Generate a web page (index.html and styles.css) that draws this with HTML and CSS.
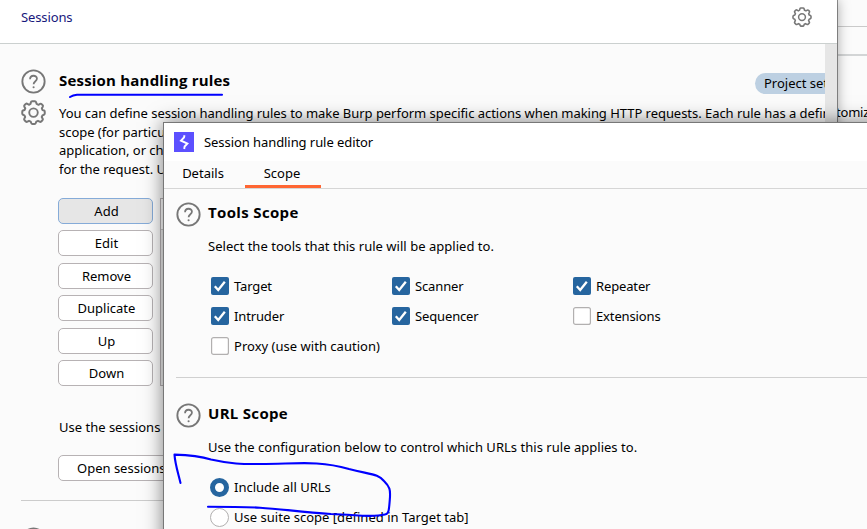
FILE: index.html
```html
<!DOCTYPE html>
<html lang="en">
<head>
<meta charset="utf-8">
<title>Sessions</title>
<link rel="stylesheet" href="styles.css">
</head>
<body>
<svg class="defs" width="0" height="0" aria-hidden="true">
  <symbol id="help" viewBox="0 0 24 24">
    <circle cx="12" cy="12" r="10.7" fill="none" stroke="#777" stroke-width="1.8"/>
    <path d="M8.7 9.8C8.7 5.4 15.4 5.5 15.3 9.4C15.3 11.8 12.1 11.7 12.1 14.6" fill="none" stroke="#777" stroke-width="1.7"/>
    <circle cx="12.1" cy="17.5" r="1" fill="#777"/>
  </symbol>
  <symbol id="gear" viewBox="0 0 24 24">
    <path d="M9.5 2.2Q9.8 1.2 10.7 1.2H13.3Q14.2 1.2 14.5 2.2L15 3.8L16.8 4.6L18.3 3.8Q19.2 3.4 19.8 4L20.8 5Q21.4 5.6 20.9 6.5L20 8L20.7 9.7L22.1 10.1Q22.8 10.4 22.8 11.2V13Q22.8 13.9 22 14.2L20.6 14.7L19.9 16.3L20.8 17.9Q21.3 18.7 20.6 19.4L19.4 20.6Q18.7 21.3 17.8 20.8L16.3 20L14.7 20.7L14.2 22.1Q13.9 23 13 23H11Q10.1 23 9.8 22.1L9.3 20.7L7.7 20L6.2 20.8Q5.3 21.3 4.6 20.6L3.4 19.4Q2.7 18.7 3.2 17.9L4 16.3L3.3 14.7L1.9 14.2Q1.2 13.9 1.2 13V11.2Q1.2 10.4 1.9 10.1L3.4 9.6L4.1 8L3.2 6.4Q2.7 5.6 3.4 4.9L4.6 3.8Q5.3 3.2 6.2 3.7L7.6 4.6L9.1 3.8Z" fill="none" stroke="#777" stroke-width="1.9" stroke-linejoin="round"/>
    <circle cx="12" cy="12.1" r="4.1" fill="none" stroke="#777" stroke-width="1.8"/>
  </symbol>
</svg>

<div class="desktop">
  <section class="window backdrop">
    <div class="strip first"></div>
    <div class="strip second"></div>
    <p class="label">tomize</p>
  </section>

  <section class="window settings">
    <header class="settings-head">
      <span class="crumb">Sessions</span>
      <svg class="icon head-gear"><use href="#gear"/></svg>
    </header>
    <div class="settings-body">
      <main class="content">
        <div class="section">
          <div class="side">
            <svg class="icon large"><use href="#help"/></svg>
            <svg class="icon large"><use href="#gear"/></svg>
          </div>
          <div class="main">
            <div class="title-row">
              <h2>Session handling rules</h2>
              <span class="badge">Project setting</span>
            </div>
            <p class="intro">You can define session handling rules to make Burp perform specific actions when making HTTP requests. Each rule has a defined<br>scope (for particular<br>application, or checking<br>for the request. Use</p>
            <div class="rules">
              <div class="buttons">
                <button class="selected">Add</button>
                <button>Edit</button>
                <button>Remove</button>
                <button>Duplicate</button>
                <button>Up</button>
                <button>Down</button>
              </div>
              <div class="table"><div class="thead"></div></div>
            </div>
            <p class="tracer">Use the sessions tracer</p>
            <button class="open">Open sessions tracer</button>
          </div>
        </div>
        <hr>
        <svg class="icon large next"><use href="#help"/></svg>
      </main>
      <div class="scrollbar"></div>
    </div>
    <svg class="ink underline" width="160" height="8" viewBox="0 0 160 8"><path d="M2 5Q5 3 9 2.7H154"/></svg>
  </section>

  <section class="window dialog">
    <header class="titlebar">
      <svg class="logo" viewBox="0 0 20 20"><rect width="20" height="20" fill="#5c50ff"/><path d="M10.5 3.2L10 5.5L7 8.6L13.4 11.6L10.6 14.5L10.2 17" fill="none" stroke="#fff" stroke-width="1.9"/></svg>
      <span class="name">Session handling rule editor</span>
    </header>
    <nav class="tabs"><span class="tab">Details</span><span class="tab active">Scope</span></nav>
    <div class="block tools">
      <div class="heading"><svg class="icon large"><use href="#help"/></svg><h2>Tools Scope</h2></div>
      <p class="desc">Select the tools that this rule will be applied to.</p>
      <div class="checks">
        <label><svg class="box"><use href="#on"/></svg><span>Target</span></label>
        <label><svg class="box"><use href="#on"/></svg><span>Scanner</span></label>
        <label><svg class="box"><use href="#on"/></svg><span>Repeater</span></label>
        <label><svg class="box"><use href="#on"/></svg><span>Intruder</span></label>
        <label><svg class="box"><use href="#on"/></svg><span>Sequencer</span></label>
        <label><svg class="box"><use href="#off"/></svg><span>Extensions</span></label>
        <label><svg class="box"><use href="#off"/></svg><span class="wide">Proxy (use with caution)</span></label>
      </div>
    </div>
    <div class="block url">
      <div class="heading"><svg class="icon large"><use href="#help"/></svg><h2>URL Scope</h2></div>
      <p class="desc">Use the configuration below to control which URLs this rule applies to.</p>
      <div class="radios">
        <label><i class="radio checked"></i><span>Include all URLs</span></label>
        <label><i class="radio"></i><span class="wide">Use suite scope [defined in Target tab]</span></label>
      </div>
    </div>
  </section>

  <svg class="ink loop" width="222" height="66" viewBox="0 0 222 66"><path d="M9.5 30C6 16 4 10 3.5 1.6C19 2 32 4 40 6.5C60 11 70 11 90 11C125 11 147 7 178 16C202 22 207 21 213 28C220 35 219 38 219 44C218 57 218 61 214 61.5C199 65 186 61.5 160 61C130 59 110 56 89 54.7C70 53.7 55 53.7 37 53.7"/></svg>
</div>

<svg class="defs" width="0" height="0" aria-hidden="true">
  <symbol id="on" viewBox="0 0 18 18"><rect width="18" height="18" rx="2" fill="#26659f"/><path d="M3.8 9.3L7.2 13L13.8 4.7" fill="none" stroke="#fff" stroke-width="2.3"/></symbol>
  <symbol id="off" viewBox="0 0 18 18"><rect x=".6" y=".6" width="16.8" height="16.8" rx="2" fill="#fff" stroke="#b2b0b0" stroke-width="1.2"/></symbol>
</svg>
</body>
</html>
```

FILE: styles.css
```css
* { box-sizing: border-box; }
body { margin: 0; font: 13px/18px "Noto Sans", sans-serif; color: #000; overflow: hidden; }
h2, p { margin: 0; white-space: nowrap; }
h2 { font: 700 15px/20px "Open Sans", sans-serif; letter-spacing: .2px; }
span { white-space: nowrap; }
svg { display: block; flex: none; }
.defs { position: absolute; }
.icon { width: 20px; height: 20px; }
.icon.large { width: 25px; height: 25px; }
.desktop { position: relative; width: 867px; height: 529px; overflow: hidden; background: #fbfbfb; }
.window { position: absolute; overflow: hidden; }

.backdrop { left: 836px; top: 0; width: 31px; height: 529px; background: #fbfbfb; }
.strip { border-bottom: 1px solid #cacaca; }
.strip.first { height: 27px; }
.strip.second { height: 29px; border-bottom: 2px solid #d3d5d6; }
.backdrop .label { margin-top: 47px; letter-spacing: -.2px; }

.settings { left: 0; top: 0; width: 837px; height: 540px; background: #fbfbfb; box-shadow: 0 0 12px rgba(0,0,0,.38), 1px 0 0 #999; }
.settings-head { display: flex; justify-content: space-between; height: 44px; padding: 7px 25px 0 21px; background: #fff; border-bottom: 1px solid #cbd0cf; }
.crumb { margin-top: 1px; color: #17177c; letter-spacing: -.12px; }
.settings-body { display: flex; height: 496px; }
.scrollbar { width: 12px; background: #e6e6e6; }
.content { width: 825px; overflow: hidden; padding: 26px 0 0 21px; }
.section { display: flex; gap: 13px; }
.side { display: flex; flex-direction: column; gap: 6px; width: 25px; margin-top: -1px; }
.main { flex: none; width: 860px; }
.title-row { display: flex; align-items: center; height: 26px; }
.title-row h2 { width: 696px; margin-top: -7px; }
.badge { height: 21px; padding: 0 9px; border-radius: 11px; background: #bdd0e2; line-height: 21px; }
.intro { margin-top: 8px; line-height: 18.7px; letter-spacing: -.04px; }
.rules { display: flex; gap: 7px; margin: 19px 0 0 -1px; }
.buttons { display: flex; flex-direction: column; gap: 6.5px; width: 95px; }
button { height: 26px; padding: 0 0 0 2px; border: 1px solid #b7b2b4; border-radius: 5px; background: #fff; font: 13px/22px "Noto Sans", sans-serif; color: #000; white-space: nowrap; }
button.selected { background: #e6e6e6; border-color: #85abd8; }
.table { width: 500px; border: 1px solid #b7b2b4; background: #eee; }
.thead { height: 31px; background: #fff; border-bottom: 1px solid #ccc; }
.tracer { margin-top: 32px; }
.open { width: 160px; margin: 19px 0 0 -1px; padding-left: 18px; text-align: left; }
hr { margin: 19px 0 0; border: 0; height: 1px; background: #ccc; }
.next { margin-top: 26px; }

.dialog { left: 163px; top: 122px; width: 740px; height: 450px; border: 1px solid #777; background: #fbfbfb; box-shadow: 0 0 18px rgba(0,0,0,.5); }
.titlebar { display: flex; align-items: center; gap: 10px; height: 38px; padding-left: 10px; background: #fff; }
.name { letter-spacing: -.07px; }
.logo { width: 20px; height: 20px; }
.tabs { display: flex; height: 28px; border-bottom: 1px solid #d6d6d6; }
.tab { width: 76px; height: 27px; margin-left: 1px; line-height: 25px; text-align: center; }
.tab.active { margin-left: 4px; padding-right: 2px; border-bottom: 3px solid #ff6633; }
.block { margin-left: 12px; }
.heading { display: flex; gap: 7px; height: 25px; }
.desc { margin: 10px 0 0 32px; letter-spacing: .025px; }
.tools { padding-top: 13px; height: 189px; border-bottom: 1px solid #d0d0d0; }
.checks { display: grid; grid-template-columns: 181px 181px 181px; row-gap: 12px; margin: 22px 0 0 35px; letter-spacing: -.14px; }
.wide { letter-spacing: .02px; }
label { display: flex; align-items: center; gap: 5px; height: 18px; }
.box { width: 18px; height: 18px; }
.url { padding-top: 25px; }
.url h2 { letter-spacing: .3px; }
.tools h2 { letter-spacing: .35px; }
.radios { display: grid; row-gap: 12px; margin: 22px 0 0 34px; }
.radio { flex: none; width: 19px; height: 19px; border: 1px solid #b2b0b0; border-radius: 50%; background: #fff; }
.radio.checked { border: 5px solid #26659f; }

.ink { position: absolute; }
.ink path { fill: none; stroke: #00f; stroke-width: 2.1; stroke-linecap: round; stroke-linejoin: round; }
.underline { left: 68px; top: 92px; }
.loop { left: 171px; top: 453px; }
```
